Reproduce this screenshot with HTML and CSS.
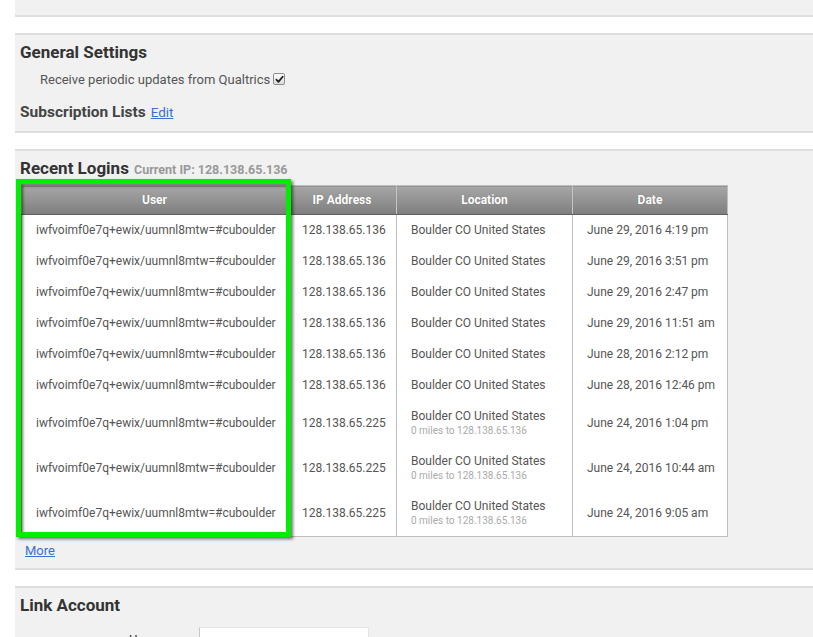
FILE: index.html
```html
<!DOCTYPE html>
<html lang="en">
<head>
<meta charset="utf-8">
<title>Account Settings</title>
<link rel="stylesheet" href="styles.css">
</head>
<body>
<div class="panel panel-top"></div>

<section class="panel">
  <h2 class="panel-title">General Settings</h2>
  <div class="option">Receive periodic updates from Qualtrics
    <span class="checkbox"><svg viewBox="0 0 10 10" width="9" height="9"><path d="M1.5 5.2 L3.8 7.6 L8.6 1.8" fill="none" stroke="#222" stroke-width="1.9" stroke-linecap="round" stroke-linejoin="round"/></svg></span>
  </div>
  <h3 class="sub-title">Subscription Lists <a href="#" class="link link-edit">Edit</a></h3>
</section>

<section class="panel">
  <h2 class="panel-title">Recent Logins <span class="current-ip">Current IP: 128.138.65.136</span></h2>
  <div class="table-wrap">
    <table class="logins">
      <colgroup>
        <col class="c-user"><col class="c-ip"><col class="c-loc"><col class="c-date">
      </colgroup>
      <thead>
        <tr><th>User</th><th>IP Address</th><th>Location</th><th>Date</th></tr>
      </thead>
      <tbody>
        <tr><td>iwfvoimf0e7q+ewix/uumnl8mtw=#cuboulder</td><td>128.138.65.136</td><td>Boulder CO United States</td><td>June 29, 2016 4:19 pm</td></tr>
        <tr><td>iwfvoimf0e7q+ewix/uumnl8mtw=#cuboulder</td><td>128.138.65.136</td><td>Boulder CO United States</td><td>June 29, 2016 3:51 pm</td></tr>
        <tr><td>iwfvoimf0e7q+ewix/uumnl8mtw=#cuboulder</td><td>128.138.65.136</td><td>Boulder CO United States</td><td>June 29, 2016 2:47 pm</td></tr>
        <tr><td>iwfvoimf0e7q+ewix/uumnl8mtw=#cuboulder</td><td>128.138.65.136</td><td>Boulder CO United States</td><td>June 29, 2016 11:51 am</td></tr>
        <tr><td>iwfvoimf0e7q+ewix/uumnl8mtw=#cuboulder</td><td>128.138.65.136</td><td>Boulder CO United States</td><td>June 28, 2016 2:12 pm</td></tr>
        <tr><td>iwfvoimf0e7q+ewix/uumnl8mtw=#cuboulder</td><td>128.138.65.136</td><td>Boulder CO United States</td><td>June 28, 2016 12:46 pm</td></tr>
        <tr><td>iwfvoimf0e7q+ewix/uumnl8mtw=#cuboulder</td><td>128.138.65.225</td><td>Boulder CO United States<span class="distance">0 miles to 128.138.65.136</span></td><td>June 24, 2016 1:04 pm</td></tr>
        <tr><td>iwfvoimf0e7q+ewix/uumnl8mtw=#cuboulder</td><td>128.138.65.225</td><td>Boulder CO United States<span class="distance">0 miles to 128.138.65.136</span></td><td>June 24, 2016 10:44 am</td></tr>
        <tr><td>iwfvoimf0e7q+ewix/uumnl8mtw=#cuboulder</td><td>128.138.65.225</td><td>Boulder CO United States<span class="distance">0 miles to 128.138.65.136</span></td><td>June 24, 2016 9:05 am</td></tr>
      </tbody>
    </table>
    <div class="highlight"></div>
  </div>
  <a href="#" class="link more">More</a>
</section>

<section class="panel">
  <h2 class="panel-title">Link Account</h2>
  <div class="form-row">
    <label class="form-label" for="username">Username</label>
    <input class="form-input" id="username" type="text">
  </div>
</section>
</body>
</html>
```

FILE: styles.css
```css
* { box-sizing: border-box; }

html {
  overflow: hidden;
  background: #ffffff;
}

body {
  margin: 0;
  padding: 0;
  font-family: Roboto, "Liberation Sans", Arial, sans-serif;
  color: #555;
  font-size: 12px;
}

.panel {
  margin-left: 15px;
  margin-right: -30px;
  background: #f1f1f1;
  border-top: 2px solid #dedede;
  border-bottom: 2px solid #dedede;
  padding: 0 0 0 5px;
  margin-top: 16px;
}

.panel-top {
  height: 17px;
  margin-top: 0;
  border-top: 0;
}

.panel-title {
  margin: 0;
  padding-top: 7px;
  font-size: 17px;
  line-height: 20px;
  font-weight: 700;
  color: #333;
}

.option {
  margin-top: 10px;
  padding-left: 20px;
  line-height: 16px;
  font-size: 13px;
  color: #555;
  display: flex;
  align-items: center;
  gap: 3px;
}

.checkbox {
  width: 12px;
  height: 12px;
  border: 1px solid #8e8e8e;
  border-radius: 2px;
  background: linear-gradient(#ffffff, #dcdcdc);
  display: inline-flex;
  align-items: center;
  justify-content: center;
  margin-top: -2px;
}

.sub-title {
  margin: 14px 0 0;
  padding-bottom: 9px;
  font-size: 15.5px;
  line-height: 20px;
  font-weight: 700;
  color: #444;
}

.link {
  color: #3a6fd4;
  text-decoration: underline;
  font-size: 13px;
  font-weight: 400;
}

.link-edit {
  font-size: 13.5px;
  margin-left: 1px;
}

.current-ip {
  font-size: 12.5px;
  color: #999;
  font-weight: 700;
  margin-left: 1px;
}

.table-wrap {
  position: relative;
  width: max-content;
  margin-top: 5px;
  margin-left: 1px;
}

.logins {
  border-collapse: collapse;
  table-layout: fixed;
  width: 706px;
  background: #fff;
  border: 1px solid #bdbdbd;
}

.c-user { width: 266px; }
.c-ip { width: 109px; }
.c-loc { width: 176px; }
.c-date { width: 155px; }

.logins th {
  height: 29px;
  padding: 0;
  font-size: 12px;
  font-weight: 700;
  color: #fff;
  text-align: center;
  background: linear-gradient(#a6a6a6, #7e7e7e);
  border-bottom: 1px solid #5e5e5e;
  border-left: 1px solid #c4c4c4;
  text-shadow: 0 0 1px rgba(0,0,0,0.25);
}

.logins th:first-child { border-left: 0; }

.logins td {
  padding: 8px 14px;
  line-height: 15px;
  font-size: 12px;
  color: #555;
  border-left: 1px solid #bdbdbd;
  vertical-align: middle;
  white-space: nowrap;
}

.logins td:first-child { border-left: 0; }

.distance {
  display: block;
  font-size: 10px;
  line-height: 14px;
  color: #aaa;
}

.highlight {
  position: absolute;
  left: -5px;
  top: -6px;
  width: 275px;
  height: 358px;
  border: 5px solid #00ee00;
  box-shadow: 2px 2px 3px rgba(0,0,0,0.55), inset 2px 2px 3px rgba(0,0,0,0.55);
  pointer-events: none;
}

.more {
  display: inline-block;
  margin: 6px 0 10px 5px;
  line-height: 15px;
}

.form-row {
  display: flex;
  align-items: flex-start;
  margin-top: 12px;
  gap: 11px;
}

.form-label {
  width: 168px;
  text-align: right;
  font-size: 13px;
  color: #333;
  padding-top: 5px;
}

.form-input {
  width: 170px;
  height: 26px;
  border: 1px solid #e4e4e4;
  border-left-color: #c8c8c8;
  background: #fff;
  margin: 0;
}
```
